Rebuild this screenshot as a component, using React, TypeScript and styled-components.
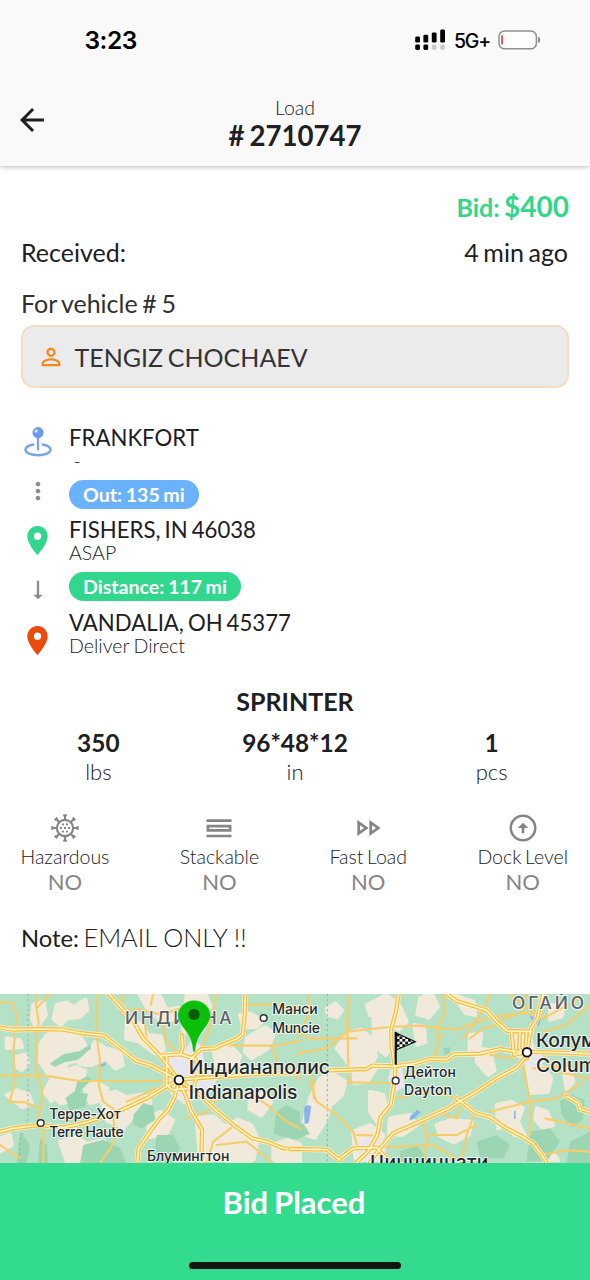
import React from 'react';
import styled, { createGlobalStyle } from 'styled-components';
import {
  MdArrowBack,
  MdPersonOutline,
  MdLocationOn,
  MdMoreVert,
  MdArrowRightAlt,
  MdOutlineFastForward,
} from 'react-icons/md';

const GlobalStyle = createGlobalStyle`
  *, *::before, *::after { box-sizing: border-box; }
  body {
    margin: 0;
    background: #fff;
    font-family: Lato, 'Noto Sans', sans-serif;
    word-spacing: -1.7px;
    color: #202022;
  }
  svg { display: block; }
`;

const Screen = styled.div`
  width: 590px;
  height: 1280px;
  display: flex;
  flex-direction: column;
  overflow: hidden;
  background: #fff;
`;

const Top = styled.header`
  height: 166px;
  flex: none;
  background: #f9f9f9;
  box-shadow: 0 1px 5px rgba(0, 0, 0, 0.28);
`;

const StatusBar = styled.div`
  height: 80px;
  padding: 0 49px 0 84.5px;
  display: flex;
  align-items: center;
  font-family: Inter, sans-serif;
  color: #000;
`;

const Time = styled.div`
  flex: 1;
  font-size: 24.5px;
  font-weight: 600;
  letter-spacing: -0.5px;
`;

const Network = styled.div`
  width: 35px;
  margin: 2px 9px 0 8px;
  font-size: 19.5px;
  font-weight: 500;
  letter-spacing: -1.2px;
  white-space: nowrap;
`;

const NavBar = styled.div`
  height: 86px;
  display: grid;
  grid-template-columns: 64px 1fr 64px;
  align-items: start;
`;

const BackButton = styled.div`
  padding: 22px 0 0 14px;
`;

const NavTitle = styled.div`
  padding-top: 14px;
  text-align: center;
`;

const NavCaption = styled.div`
  font-size: 19.5px;
  line-height: 27px;
  font-weight: 300;
`;

const NavNumber = styled.div`
  font-size: 27.6px;
  line-height: 30px;
  font-weight: 700;
`;

const Content = styled.main`
  height: 828px;
  flex: none;
`;

const Row = styled.div<{ $h: number }>`
  height: ${p => p.$h}px;
  padding: 0 22px 0 21px;
  display: flex;
  align-items: center;
  justify-content: space-between;
  font-size: 25px;
  white-space: nowrap;
`;

const Bid = styled.div`
  margin: 0 -1px 0 auto;
  padding-top: 13px;
  font-size: 25px;
  font-weight: 700;
  color: #33d68c;
`;

const Amount = styled.span`
  font-size: 28px;
`;

const VehicleLabel = styled.div`
  padding-top: 8px;
  color: #303032;
`;

const Driver = styled.div`
  height: 63px;
  margin: 0 21px;
  padding: 0 14px;
  display: flex;
  align-items: center;
  gap: 9.5px;
  border: 2.5px solid #f8dcc2;
  border-radius: 13px;
  background: #ebebeb;
  font-size: 25px;
  line-height: 28px;
  color: #333335;
`;

const Route = styled.section`
  padding: 35px 21px 0;
  display: flex;
  height: 286px;
`;

const Markers = styled.div`
  width: 33.5px;
  display: flex;
  flex-direction: column;
  align-items: center;
`;

const Marker = styled.div<{ $h: number; $color: string }>`
  height: ${p => p.$h}px;
  display: flex;
  align-items: center;
  color: ${p => p.$color};
`;

const Stops = styled.div`
  padding-left: 14.5px;
`;

const Place = styled.div`
  height: 28px;
  font-size: 22.2px;
  line-height: 29px;
  white-space: nowrap;
`;

const When = styled.div`
  height: 29px;
  font-size: 19.6px;
  line-height: 20px;
  font-weight: 300;
  word-spacing: -0.8px;
  white-space: pre;
`;

const Pill = styled.div<{ $color: string }>`
  width: fit-content;
  height: 29px;
  margin-bottom: 6.4px;
  padding: 0 14px;
  border-radius: 15px;
  background: ${p => p.$color};
  color: #fff;
  font-size: 19.6px;
  line-height: 29px;
  font-weight: 700;
  word-spacing: -1.2px;
`;

const Vehicle = styled.div`
  height: 54px;
  padding-top: 12px;
  text-align: center;
  font-size: 25px;
  line-height: 30px;
  font-weight: 700;
`;

const Measures = styled.div`
  display: grid;
  grid-template-columns: repeat(3, 1fr);
  height: 84px;
  text-align: center;
`;

const Measure = styled.div`
  font-size: 24.4px;
  line-height: 30px;
  font-weight: 700;
`;

const Unit = styled.div`
  font-size: 22px;
  line-height: 28px;
  font-weight: 300;
`;

const Flags = styled.div`
  height: 97px;
  padding: 0 22px 0 20.5px;
  display: flex;
  justify-content: space-between;
`;

const Flag = styled.div`
  display: flex;
  flex-direction: column;
  align-items: center;
  color: #858587;
`;

const FlagName = styled.div`
  font-size: 19.5px;
  line-height: 25px;
  font-weight: 300;
  color: #202022;
`;

const FlagValue = styled.div`
  font-size: 22px;
  line-height: 26px;
`;

const Note = styled.div`
  padding: 13px 21px 0;
  font-size: 23.8px;
  line-height: 30px;
`;

const NoteText = styled.span`
  font-size: 25.3px;
  font-weight: 300;
  word-spacing: 0;
`;

const MapPane = styled.div`
  height: 168.5px;
  flex: none;
`;

const Footer = styled.footer`
  flex: 1;
  display: flex;
  flex-direction: column;
  align-items: center;
  justify-content: space-between;
  padding: 21px 0 11px;
  background: #33db8e;
`;

const FooterLabel = styled.div`
  padding-right: 2px;
  font-size: 31px;
  line-height: 36px;
  font-weight: 700;
  color: #fff;
`;

const HomeBar = styled.div`
  width: 212px;
  height: 7px;
  border-radius: 4px;
  background: #121413;
`;

const Signal = () => (
  <svg width="31" height="22" viewBox="0 0 31 22">
    <g fill="#000">
      <rect x="0.2" y="7.6" width="4.8" height="6" rx="1.4" />
      <rect x="8.4" y="5.8" width="4.8" height="7.8" rx="1.4" />
      <rect x="16.8" y="3.4" width="4.8" height="10.2" rx="1.4" />
      <rect x="25.2" y="0.6" width="4.8" height="13" rx="1.4" />
      <rect x="0.2" y="15.6" width="4.8" height="5.4" rx="1.4" />
      <rect x="8.4" y="15.6" width="4.8" height="5.4" rx="1.4" />
    </g>
    <g fill="#c9c9c9">
      <rect x="16.8" y="15.8" width="4.6" height="5" rx="1.4" />
      <rect x="25.2" y="15.8" width="4.6" height="5" rx="1.4" />
    </g>
  </svg>
);

const Battery = () => (
  <svg width="43" height="20" viewBox="0 0 43 20">
    <rect x="1" y="1" width="37.4" height="17.8" rx="5.6" fill="#fdfdfd" stroke="#8f8f8d" strokeWidth="1.5" />
    <rect x="3.2" y="5.2" width="1.7" height="9.4" rx="0.8" fill="#f3323a" />
    <path d="M40 6.8c1.6.5 2.2 1.6 2.2 3.1s-.6 2.6-2.2 3.1z" fill="#8f8f8d" />
  </svg>
);

const OriginIcon = () => (
  <svg width="28" height="32" viewBox="0 0 28 32">
    <path d="M10.2 18.4C5.2 19 1.5 21.2 1.5 23.8c0 3.1 5.6 5.5 12.5 5.5s12.5-2.4 12.5-5.5c0-2.6-3.7-4.8-8.7-5.4" fill="none" stroke="#7aa3f2" strokeWidth="2.5" />
    <path d="M14 10v13.5" stroke="#7aa3f2" strokeWidth="2.3" strokeLinecap="round" />
    <circle cx="14" cy="6.6" r="5.5" fill="#6a98f1" />
    <circle cx="12.2" cy="5" r="1.7" fill="#d5e3fd" />
  </svg>
);

const spokes = [0, 45, 90, 135, 180, 225, 270, 315];
const spores: [number, number][] = [[14, 14], [10, 14], [18, 14], [12, 10.4], [16, 10.4], [12, 17.6], [16, 17.6]];

const HazardIcon = () => (
  <svg width="28" height="32" viewBox="0 -2 28 32">
    <g fill="none" stroke="currentColor" strokeWidth="2.1">
      <circle cx="14" cy="14" r="8.1" />
      {spokes.map(a => (
        <path key={a} transform={`rotate(${a} 14 14)`} d="M14 6V1.4M12.2 1.3h3.6" />
      ))}
    </g>
    {spores.map(([x, y]) => (
      <circle key={`${x}-${y}`} cx={x} cy={y} r="1.15" fill="currentColor" />
    ))}
  </svg>
);

const StackIcon = () => (
  <svg width="26" height="32" viewBox="0 0 26 32">
    <path d="M.5 7.3h25v2.6H.5zM.5 22.7h25v2.6H.5z" fill="currentColor" />
    <path d="M1.9 14.2h22.2v4.2H1.9z" fill="none" stroke="currentColor" strokeWidth="2.7" />
  </svg>
);

const DockIcon = () => (
  <svg width="32" height="32" viewBox="0 0 24 24">
    <circle cx="12" cy="12" r="9.2" fill="none" stroke="currentColor" strokeWidth="1.9" />
    <path d="M11 12v4h2v-4h3l-4-4-4 4z" fill="currentColor" />
  </svg>
);

const creamWest =
  'M170 60l30-8 20 14 36-22 6 30-24 22-36 4-20 20-22-18zM140 150l34-12 60 6 24 40-12 40-44 10-20 50-30-6-34-50 4-50zM225 215l40-14 20-30 30 18 46 14 8 36-22 12-30-30-46 20-32-4zM50 215l26-6 8 26-20 20-16-10zM20 160l40 6 6 20-46 4zM190 260l36-14 30 12-10 40-30 50-34 8-24-30zM250 300l36-8 36 18-10 34-42 10zM20 330l30-14 36 12 10 28-30 10zM150 290l26 4 4 34-26 20-20-26zM300 330l48-10 30 16 54-8 20 22-20 40-34 4-26 34-50-20zM0 460l30-10 6 30-36 20zM180 470l50-14 30 20 50-10 20 20-14 44H200zM380 110l50 8 12 32 40 4 10 40-30 10-44-34-40-10zM420 30l60 4 20 40 36-6 10 30-60 10-40-30zM560 30l56-4 16 40-30 20 10 46-30 20-34-16zM640 190l50-8 30 30-10 34-60 0zM740 160l56-34 26 20-18 44-50 30-20-20zM590 400l50-6 34 30 40-20 40 16 20 44-14 60H600zM750 330l44-4 20 26-30 40-36-20zM690 440l50 10 30 40-20 40h-70zM820 480l44-16 36 14v54h-80zM720 90l30-4 40 20-20 20-40 0zM100 60l30-10 8 40-30 40-12-30zM440 400l40-20 40 26-20 40-50 10z';
const creamEast =
  'M110 70l26-14 20 20-14 20-28-6zM230 60l60-30 40 34 20 46-24 24-40-34-46-10zM390 40l34-16 20 40-28 34-34-10zM140 190l30-46 44-10 34 30 10 50-20 30-44 10-20-20zM60 340l30-60 40-14 36 24-10 40-34 30-14 44-34 54-26-8-6-40zM190 240l40-6 26 20-24 36-40 4zM372 120l30 6 4 44-24 10zM240 320l40 10 10 40-30 40-20-30zM250 100l50 20 10 60-24 30-34-30zM300 400l60-10 20 30-44 30-40-4zM440 420l40-14 66 4-10 40-46 22-40-20zM540 150l34-4-6 40-30 6zM560 190l40 6 14 60-20 14-34-40zM620 360l44-10 34 20-14 40 20 40-30 0-30-30-20 10zM490 30l60 20 6 40-30-6zM710 240l50 6 24 34-10 40-50 4zM780 60l40 4-4 30-36 10zM740 370l30 10 20 40-30 12-24-30zM820 250l20 0 10 40-20 24zM190 440l50-20 40 30-30 60-54 10zM720 480l60 6 24 40h-84z';
const forest =
  'M150 236l40-28 50-10 30-20 4 12-40 34-40 8-30 14zM232 290l30-18 14 12-26 24-20 30-6-20zM196 340l24-20 44 6-10 40-44 10zM400 390l30-36 30 10 6 40-40 26-26-10zM250 480l60-16 50 24 20 48H240zM470 450l50 0 20 40-20 44h-60zM830 380l30-20 40 20v40l-34 40-46-14zM60 440l30 40-10 56H50zM120 460l20 20 4 56h-30z';
const forestEast =
  'M810 350l30-24 44 20-6 60-34 20-30-40zM720 440l60-10 30 40-40 60h-60zM0 410l40 6 20 30-40 16-20 0zM560 470l60-20 40 30-20 40-70 0zM460 190l20-4 0 20-16 4zM840 470l60-30v94h-70zM330 500l50-20 40 50h-90z';

const highwaysWest = [
  'M0 128L40 134 120 132 190 134 240 144 312 152 345 178 410 228 450 240 500 266 536 284',
  'M326 26L372 76 400 110 430 160 476 208 500 238 536 284',
  'M736 26L734 90 728 148 710 162 664 180 646 190 604 192 572 222 582 260',
  'M546 150L548 188 542 208 484 212M500 214L500 300M542 208L586 222 604 270',
  'M0 440L40 430 120 420 190 428 260 412 350 382 440 340 500 304 536 284',
  'M412 530L416 490 450 440 478 402 504 376 524 336 536 290',
  'M536 290L556 330 572 376 606 434 604 534',
  'M536 284L600 330 648 376 706 424 756 460 800 470 850 490 900 492',
  'M536 284L640 276 760 268 900 262M500 300L516 314 580 310 590 276',
];
const highwaysEast = [
  'M120 256L230 252 246 242 310 244 372 236 420 222 470 224 490 208 570 206 630 192 680 200 712 200',
  'M326 26L318 80 304 130 304 180 314 240',
  'M316 240L314 286 302 360 272 396 262 450 234 500 200 532',
  'M470 26L500 48 540 60 590 76 620 110 652 138 724 140M664 138L672 210 712 200M690 140L688 190 712 220M710 140L706 200',
  'M760 26L742 100 722 132 712 200 780 202 900 206',
  'M712 210L680 248 620 280 560 320 510 348 480 368 380 414 310 444 270 490 240 532',
  'M500 340L556 384 600 396 650 430 700 456 730 476 756 510 770 534',
  'M0 492L110 494 150 526M150 520L190 490 260 488 290 520',
  'M830 334L864 354 870 372 910 384',
];
const minorWest = [
  'M0 52L40 54 50 90 40 200 46 280 30 350',
  'M112 26L108 60 116 110 108 180 110 260 126 310 126 350 116 400',
  'M292 26L290 150 300 230 296 300 310 350 350 380',
  'M0 272L130 272 240 288 500 288',
  'M430 76L440 160M374 76L420 74 480 88 546 70M150 26L110 70',
  'M24 350L76 352 122 372M130 420L130 534M0 480L60 520',
  'M380 350L470 310M480 80L500 170 540 210M460 26L452 60',
  'M650 180L740 182 830 182 900 166M740 60L830 58 900 70',
  'M640 350L700 326 760 330 810 366 860 410 900 430',
  'M370 26L360 80 380 90M604 190L626 140 650 26M700 424L640 470 620 534M340 384L344 470 300 534',
  'M650 480L740 470 820 534M560 400L620 380 640 360M816 180L834 240 900 280',
];
const minorEast = [
  'M0 134L60 160 200 160M172 100L176 292M176 26L172 100 170 140 300 126 384 122 500 134 600 96 700 84 760 90',
  'M60 290L80 350 140 390 190 440 200 480M172 292L310 294',
  'M68 270L72 340M172 140L110 190 20 206M450 150L444 190 420 230M460 30L462 90 440 130 446 180',
  'M540 160L580 130 640 114M600 26L580 76 520 160M316 340L400 320 520 340 500 400 430 380',
  'M600 380L720 350 800 340 880 290M722 350L720 450M660 26L700 60 760 100 870 40',
  'M554 384L530 450 514 530M760 210L800 260 900 280M700 240L710 300 722 350M670 220L600 210M400 412L412 460 400 530',
  'M200 450L262 452M262 488L430 480 520 534M752 510L830 496 900 500M730 250L900 240M30 134L60 90 54 26',
  'M620 110L700 80 710 26M760 140L830 120 900 60M560 420L500 450 420 450M766 400L900 430',
];

const Roads = ({ major, minor }: { major: string[]; minor: string[] }) => (
  <g fill="none" strokeLinejoin="round" strokeLinecap="round">
    <path d={minor.join('')} stroke="#f5cd6c" strokeWidth="6.5" />
    <path d={major.join('')} stroke="#fdf4d5" strokeWidth="17" />
    <path d={major.join('')} stroke="#f5be4c" strokeWidth="13" />
    <path d={major.join('')} stroke="#fff5bd" strokeWidth="5" />
  </g>
);

const MapText = styled.text<{ $size: number; $weight?: number; $color?: string; $track?: number }>`
  font-family: Inter, 'Noto Sans', sans-serif;
  font-size: ${p => p.$size}px;
  font-weight: ${p => p.$weight ?? 500};
  fill: ${p => p.$color ?? '#252729'};
  letter-spacing: ${p => p.$track ?? 0}px;
  stroke: rgba(255, 255, 255, 0.8);
  stroke-width: 6px;
  stroke-linejoin: round;
  paint-order: stroke;
`;

const flagRows = [0, 1, 2, 3, 4, 5];
const flagCols = [0, 1, 2, 3];

const RegionMap = () => (
  <svg width="590" height="169" viewBox="0 27 1770 507">
    <rect y="27" width="1770" height="507" fill="#b5e1c6" />
    <g strokeLinejoin="round" strokeWidth="12">
      <path d={creamWest} fill="#f1eadb" stroke="#f1eadb" />
      <path d={forest} fill="#9bd5b1" />
    </g>
    <g transform="translate(870)" strokeLinejoin="round" strokeWidth="12">
      <path d={creamEast} fill="#f1eadb" stroke="#f1eadb" />
      <path d={forestEast} fill="#9bd5b1" />
    </g>
    <path d="M496 222l50-14 30-46 30 20 6 50 40 50-20 40-80 36-40-30-16-50zM1540 150l50-6 20 50 30 20-20 34-50-10-30-40zM1070 470l50-20 40 30-10 50h-70zM1176 240l30 6 8 60-30 16-20-40z" fill="#e6e6ef" />
    <g fill="#87b7ea">
      <path d="M912 370l8-10 14 4-8 50-12 4zM1232 392l20-18 10 8-20 20-14 4zM1588 90l10 6 26 2-8 24-16-10zM298 240l22-8-4 8-16 8zM1542 378h5v24h-5z" />
    </g>
    <path d="M84 27V400L60 470V534M982 27V534" fill="none" stroke="#8db4a0" strokeWidth="3" strokeDasharray="7 8" />
    <Roads major={highwaysWest} minor={minorWest} />
    <g transform="translate(870)">
      <Roads major={highwaysEast} minor={minorEast} />
    </g>
    <g fill="#fff" stroke="#303236" strokeWidth="4.5">
      <circle cx="122" cy="414" r="10" />
      <circle cx="791" cy="99" r="10" />
      <circle cx="1187" cy="287" r="10" />
      <circle cx="537" cy="285" r="13" strokeWidth="5.5" stroke="#111" />
      <circle cx="1581" cy="202" r="13" strokeWidth="5.5" stroke="#111" />
    </g>
    <MapText x="375" y="117" $size={52} $color="#5c6069" $track={5.5} textLength="325">ИНДИАНА</MapText>
    <MapText x="1536" y="71" $size={52} $color="#5c6069" textLength="216">ОГАЙО</MapText>
    <MapText x="817" y="87" $size={42} textLength="136">Манси</MapText>
    <MapText x="817" y="143" $size={42} textLength="143">Muncie</MapText>
    <MapText x="566" y="267" $size={58} textLength="424">Индианаполис</MapText>
    <MapText x="566" y="343" $size={58} textLength="326">Indianapolis</MapText>
    <MapText x="148" y="401" $size={42} textLength="214">Терре-Хот</MapText>
    <MapText x="148" y="457" $size={42} textLength="223">Terre Haute</MapText>
    <MapText x="441" y="529" $size={42} textLength="247">Блумингтон</MapText>
    <MapText x="1212" y="276" $size={42} textLength="156">Дейтон</MapText>
    <MapText x="1212" y="331" $size={42} textLength="144">Dayton</MapText>
    <MapText x="1608" y="185" $size={58} textLength="278">Колумбус</MapText>
    <MapText x="1608" y="260" $size={58} textLength="283">Columbus</MapText>
    <MapText x="1110" y="553" $size={58} textLength="355">Цинциннати</MapText>
    <path d="M579 200c-2-32-12-48-24-65-11-14-22-29-22-47a50 49 0 0 1 99 0c0 18-11 33-22 47-12 17-22 33-24 65z" fill="#0bc00b" stroke="#fff" strokeOpacity="0.5" strokeWidth="2" />
    <circle cx="582" cy="88" r="17" fill="#065c07" />
    <clipPath id="pennant"><path d="M1190 145L1246 170 1190 194z" /></clipPath>
    <path d="M1190 145L1246 170 1190 194z" fill="#fff" stroke="#111" strokeWidth="3.5" />
    <g fill="#111" clipPath="url(#pennant)">
      {flagRows.flatMap(r =>
        flagCols.map(c => (
          <rect key={`${r}-${c}`} x={1190 + c * 17 + (r % 2) * 8.5} y={146 + r * 8} width="8.5" height="8" />
        )),
      )}
    </g>
    <rect x="1184" y="141" width="6.5" height="98" fill="#111" />
  </svg>
);

const flags = [
  { name: 'Hazardous', value: 'NO', icon: <HazardIcon /> },
  { name: 'Stackable', value: 'NO', icon: <StackIcon /> },
  { name: 'Fast Load', value: 'NO', icon: <MdOutlineFastForward size={32} /> },
  { name: 'Dock Level', value: 'NO', icon: <DockIcon /> },
];

const measures = [
  { value: '350', unit: 'lbs' },
  { value: '96*48*12', unit: 'in' },
  { value: '1', unit: 'pcs' },
];

export default function App() {
  return (
    <>
      <GlobalStyle />
      <Screen>
        <Top>
          <StatusBar>
            <Time>3:23</Time>
            <Signal />
            <Network>5G+</Network>
            <Battery />
          </StatusBar>
          <NavBar>
            <BackButton><MdArrowBack size={36} /></BackButton>
            <NavTitle>
              <NavCaption>Load</NavCaption>
              <NavNumber># 2710747</NavNumber>
            </NavTitle>
          </NavBar>
        </Top>
        <Content>
          <Row $h={66}><Bid>Bid: <Amount>$400</Amount></Bid></Row>
          <Row $h={40}><span>Received:</span><span>4 min ago</span></Row>
          <Row $h={53}><VehicleLabel>For vehicle # 5</VehicleLabel></Row>
          <Driver>
            <MdPersonOutline size={28} color="#f08a1d" />
            <span>TENGIZ CHOCHAEV</span>
          </Driver>
          <Route>
            <Markers>
              <Marker $h={38} $color="#6a98f1"><OriginIcon /></Marker>
              <Marker $h={60} $color="#8c8c8e"><MdMoreVert size={28} /></Marker>
              <Marker $h={38} $color="#31d78c"><MdLocationOn size={35} /></Marker>
              <Marker $h={62} $color="#8c8c8e">
                <MdArrowRightAlt size={28} style={{ transform: 'rotate(90deg)' }} />
              </Marker>
              <Marker $h={38} $color="#ea4c0c"><MdLocationOn size={35} /></Marker>
            </Markers>
            <Stops>
              <Place>FRANKFORT</Place>
              <When> -</When>
              <Pill $color="#6ab2fb">Out: 135 mi</Pill>
              <Place>FISHERS, IN 46038</Place>
              <When>ASAP</When>
              <Pill $color="#31d78c">Distance: 117 mi</Pill>
              <Place>VANDALIA, OH 45377</Place>
              <When>Deliver Direct</When>
            </Stops>
          </Route>
          <Vehicle>SPRINTER</Vehicle>
          <Measures>
            {measures.map(m => (
              <div key={m.unit}>
                <Measure>{m.value}</Measure>
                <Unit>{m.unit}</Unit>
              </div>
            ))}
          </Measures>
          <Flags>
            {flags.map(f => (
              <Flag key={f.name}>
                {f.icon}
                <FlagName>{f.name}</FlagName>
                <FlagValue>{f.value}</FlagValue>
              </Flag>
            ))}
          </Flags>
          <Note>Note: <NoteText>EMAIL ONLY !!</NoteText></Note>
        </Content>
        <MapPane><RegionMap /></MapPane>
        <Footer>
          <FooterLabel>Bid Placed</FooterLabel>
          <HomeBar />
        </Footer>
      </Screen>
    </>
  );
}
